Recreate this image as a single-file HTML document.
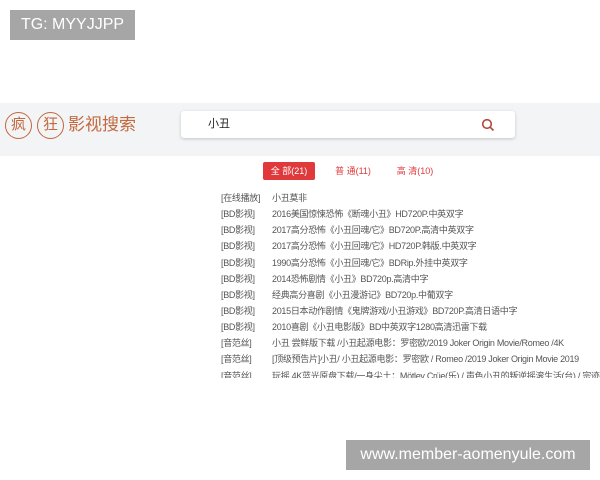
<!DOCTYPE html>
<html><head><meta charset="utf-8"><style>
*{margin:0;padding:0;box-sizing:border-box}
body{width:600px;height:480px;background:#fff;position:relative;overflow:hidden;font-family:"Liberation Sans","Noto Sans CJK SC",sans-serif}
.b{position:absolute;background:#a6a6a6;color:#fff;font-size:16px;line-height:30px;text-align:center}
.hdr{position:absolute;left:0;top:103px;width:600px;height:53px;background:#f3f4f6}
.c{position:absolute;top:112px;width:27px;height:27px;border:1.5px solid #c2693f;border-radius:50%;color:#c2693f;font-size:15px;line-height:24px;text-align:center}
.lt{position:absolute;left:68px;top:114px;color:#c2693f;font-size:17px;line-height:22px}
.sb{position:absolute;left:181px;top:111px;width:334px;height:27px;background:#fff;border-radius:3px;box-shadow:0 1px 3px rgba(0,0,0,.2);font-size:11px;line-height:27px;padding-left:27px;color:#222}
.tab{position:absolute;top:162px;height:18px;font-size:9px;line-height:18px;color:#e0393b;text-align:center}
.row{position:absolute;left:221px;font-size:9px;color:#555;white-space:nowrap;line-height:12px;letter-spacing:-0.3px}
.row span{position:absolute;left:51px}
</style></head><body>
<div class="b" style="left:10px;top:10px;width:125px">TG: MYYJJPP</div>
<div class="hdr"></div>
<div class="c" style="left:5px">疯</div>
<div class="c" style="left:37px">狂</div>
<div class="lt">影视搜索</div>
<div class="sb">小丑
<svg style="position:absolute;left:300px;top:7px" width="14" height="14" viewBox="0 0 14 14"><circle cx="6" cy="6" r="4.3" fill="none" stroke="#b5473a" stroke-width="1.6"/><path d="M9.2 9.2L12.5 12.5" stroke="#b5473a" stroke-width="1.6"/></svg></div>
<div class="tab" style="left:263px;width:52px;background:#e0393b;color:#fff;border-radius:2px">全 部(21)</div>
<div class="tab" style="left:333px;width:40px">普 通(11)</div>
<div class="tab" style="left:395px;width:40px">高 清(10)</div>
<div style="position:absolute;left:0;top:190px;width:600px;height:188px;overflow:hidden">
<div class="row" style="top:2px">[在线播放]<span>小丑莫非</span></div>
<div class="row" style="top:18px">[BD影视]<span>2016美国惊悚恐怖《断魂小丑》HD720P.中英双字</span></div>
<div class="row" style="top:34px">[BD影视]<span>2017高分恐怖《小丑回魂/它》BD720P.高清中英双字</span></div>
<div class="row" style="top:50px">[BD影视]<span>2017高分恐怖《小丑回魂/它》HD720P.韩版.中英双字</span></div>
<div class="row" style="top:67px">[BD影视]<span>1990高分恐怖《小丑回魂/它》BDRip.外挂中英双字</span></div>
<div class="row" style="top:83px">[BD影视]<span>2014恐怖剧情《小丑》BD720p.高清中字</span></div>
<div class="row" style="top:99px">[BD影视]<span>经典高分喜剧《小丑漫游记》BD720p.中葡双字</span></div>
<div class="row" style="top:115px">[BD影视]<span>2015日本动作剧情《鬼牌游戏/小丑游戏》BD720P.高清日语中字</span></div>
<div class="row" style="top:131px">[BD影视]<span>2010喜剧《小丑电影版》BD中英双字1280高清迅雷下载</span></div>
<div class="row" style="top:147px">[音范丝]<span>小丑 尝鲜版下载 /小丑起源电影：罗密欧/2019 Joker Origin Movie/Romeo /4K</span></div>
<div class="row" style="top:163px">[音范丝]<span>[顶级预告片]小丑/ 小丑起源电影：罗密欧 / Romeo /2019 Joker Origin Movie 2019</span></div>
<div class="row" style="top:180px">[音范丝]<span>玩摇 4K蓝光原盘下载/一身尖土：Mötley Crüe(乐) / 声色小丑的叛逆摇滚生活(台) / 宗迹</span></div>
</div>
<div class="b" style="left:346px;top:440px;width:244px">www.member-aomenyule.com</div>
</body></html>
